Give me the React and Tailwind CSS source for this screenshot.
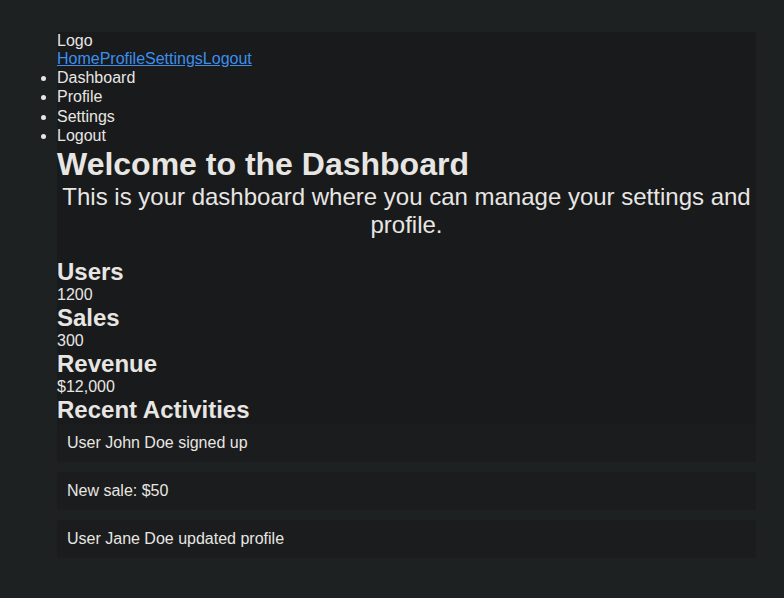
import React from 'react';

const stats = [
  { label: 'Users', value: '1200' },
  { label: 'Sales', value: '300' },
  { label: 'Revenue', value: '$12,000' },
];

const activities = ['User John Doe signed up', 'New sale: $50', 'User Jane Doe updated profile'];

export default function App() {
  return (
    <div className="min-h-[598px] bg-[#1e2122] pt-8 text-[#e8e6e3] font-['Liberation_Sans',Arial,sans-serif] text-[16px] leading-[normal]">
      <div className="w-[699px] h-[429px] bg-[#181a1b] ml-[57px]">
        <header>
          <div>Logo</div>
          <nav className="flex">
            <a href="#" className="text-[#3d8fee] underline">Home</a>
            <a href="#" className="text-[#3d8fee] underline">Profile</a>
            <a href="#" className="text-[#3d8fee] underline">Settings</a>
            <a href="#" className="text-[#3d8fee] underline">Logout</a>
          </nav>
        </header>
        <ul className="list-disc leading-[19.33px]">
          <li>Dashboard</li>
          <li>Profile</li>
          <li>Settings</li>
          <li>Logout</li>
        </ul>
        <h1 className="text-[32px] font-bold leading-[38px]">Welcome to the Dashboard</h1>
        <p className="text-[24px] text-center leading-[normal] mb-[19px]">
          This is your dashboard where you can manage your settings and profile.
        </p>
        {stats.map((s) => (
          <div key={s.label}>
            <h2 className="text-[24px] font-bold leading-[normal]">{s.label}</h2>
            <p>{s.value}</p>
          </div>
        ))}
        <h2 className="text-[24px] font-bold leading-[normal]">Recent Activities</h2>
        <div>
          {activities.map((a) => (
            <div key={a} className="bg-[#1a1c1d] rounded-[4px] p-[10px] mb-[10px]">
              {a}
            </div>
          ))}
        </div>
      </div>
    </div>
  );
}
